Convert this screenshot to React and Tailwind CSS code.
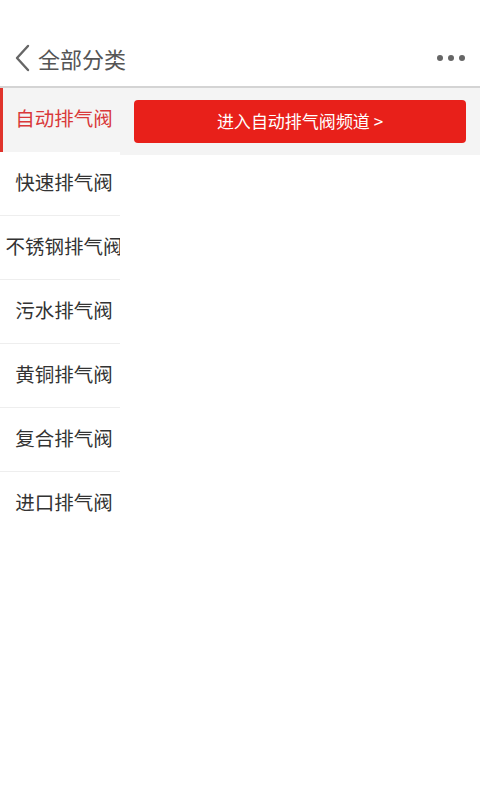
import React, { useState } from "react";

const categories = [
  "自动排气阀",
  "快速排气阀",
  "不锈钢排气阀",
  "污水排气阀",
  "黄铜排气阀",
  "复合排气阀",
  "进口排气阀",
];

export default function App() {
  const [active, setActive] = useState(0);

  return (
    <div
      className="w-[480px] h-[800px] bg-white overflow-hidden"
      style={{ fontFamily: '"Noto Sans CJK SC", "Noto Sans", sans-serif' }}
    >
      {/* Header */}
      <div className="h-[88px] flex items-end border-b-2 border-[#d4d4d4]">
        <div className="h-[56px] w-full flex items-center pl-[13px] pr-[15px]">
          <svg width="18" height="28" viewBox="0 0 18 28" className="mr-[7px]">
            <path
              d="M15 2 L4 14 L15 26"
              fill="none"
              stroke="#666"
              strokeWidth="2.4"
              strokeLinecap="round"
              strokeLinejoin="round"
            />
          </svg>
          <span className="text-[22px] leading-none text-[#555]">全部分类</span>
          <div className="ml-auto flex items-center gap-[5px]">
            <span className="w-[6px] h-[6px] rounded-full bg-[#666]" />
            <span className="w-[6px] h-[6px] rounded-full bg-[#666]" />
            <span className="w-[6px] h-[6px] rounded-full bg-[#666]" />
          </div>
        </div>
      </div>

      <div className="flex">
        {/* Sidebar */}
        <div className="w-[120px] shrink-0 overflow-hidden">
          {categories.map((name, i) => (
            <div
              key={name}
              onClick={() => setActive(i)}
              className={
                i === active
                  ? "relative h-[64px] flex items-center bg-[#f4f4f4]"
                  : i === categories.length - 1
                  ? "relative h-[64px] flex items-center bg-white"
                  : "relative h-[64px] flex items-center bg-white border-b border-[#eeeeee]"
              }
            >
              {i === active && (
                <span className="absolute left-0 top-0 bottom-0 w-[3px] bg-[#e0332b]" />
              )}
              <div
                className={
                  i === active
                    ? "w-[128px] shrink-0 text-center text-[19.5px] leading-none pb-[4px] text-[#d9393a] whitespace-nowrap"
                    : "w-[128px] shrink-0 text-center text-[19.5px] leading-none pb-[4px] text-[#333] whitespace-nowrap"
                }
              >
                {name}
              </div>
            </div>
          ))}
        </div>

        {/* Content */}
        <div className="flex-1">
          <div className="bg-[#f4f4f4] px-[14px] pt-[12px] pb-[12px]">
            <button className="w-full h-[43px] rounded-[4px] bg-[#e8201a] text-white text-[17px] leading-none pb-[2px] flex items-center justify-center">
              进入{categories[active]}频道 &gt;
            </button>
          </div>
        </div>
      </div>
    </div>
  );
}
